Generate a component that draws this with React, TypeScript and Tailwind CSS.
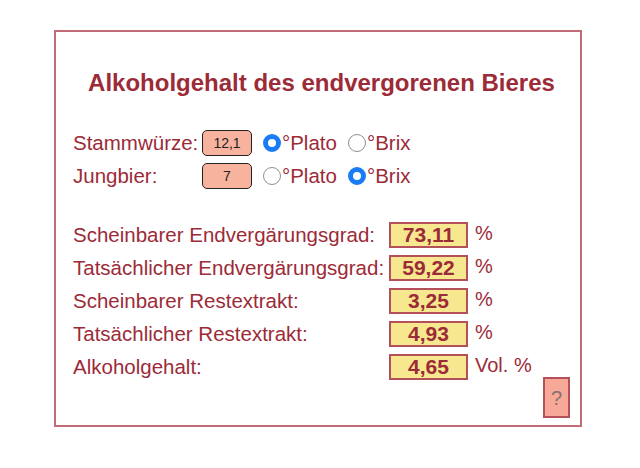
import React from 'react'

const font = { fontFamily: '"Liberation Sans", Arial, sans-serif' }

function Radio({ checked }: { checked: boolean }) {
  if (checked) {
    return <span className="inline-block size-[18px] shrink-0 rounded-full border-[5px] border-[#1a7cf4] bg-white" />
  }
  return <span className="inline-block size-[18px] shrink-0 rounded-full border border-[#8e8e8e] bg-white" />
}

function InputRow({ label, value, plato }: { label: string; value: string; plato: boolean }) {
  return (
    <div className="flex h-[26px] items-center">
      <div className="w-[129px] text-[20.5px] text-[#9c2b38]">{label}</div>
      <div className="flex h-[26px] w-[50px] items-center justify-center rounded-[5px] border border-[#222] bg-[#f8b39f] text-[14px] text-[#222]">
        {value}
      </div>
      <div className="ml-[11px] flex items-center gap-[1px]">
        <Radio checked={plato} />
        <span className="text-[20.5px] text-[#9c2b38]">°Plato</span>
      </div>
      <div className="ml-[11px] flex items-center gap-[1px]">
        <Radio checked={!plato} />
        <span className="text-[20.5px] text-[#9c2b38]">°Brix</span>
      </div>
    </div>
  )
}

function ResultRow({ label, value, unit }: { label: string; value: string; unit: string }) {
  return (
    <div className="flex h-[26px] items-center">
      <div className="w-[316px] text-[20.5px] text-[#9c2b38]">{label}</div>
      <div className="flex h-[26px] w-[79px] items-center justify-center border-2 border-[#b4505a] bg-[#f7e88f] text-[21px] font-bold text-[#9c2b38]">
        {value}
      </div>
      <div className="ml-[7px] mt-[-4px] text-[20px] text-[#9c2b38]">{unit}</div>
    </div>
  )
}

export default function App() {
  return (
    <div className="h-[468px] w-[640px] bg-white pl-[54px] pt-[30px]" style={font}>
      <div className="flex h-[397px] w-[528px] flex-col border-2 border-[#c26c7a] pl-[17px] pr-[10px]">
        <h1 className="mt-[38px] text-center text-[24px] font-bold leading-[26px] text-[#9c2b38]">
          Alkoholgehalt des endvergorenen Bieres
        </h1>
        <div className="mt-[34px] flex flex-col gap-[7px]">
          <InputRow label="Stammwürze:" value="12,1" plato={true} />
          <InputRow label="Jungbier:" value="7" plato={false} />
        </div>
        <div className="mt-[33px] flex flex-col gap-[7px]">
          <ResultRow label="Scheinbarer Endvergärungsgrad:" value="73,11" unit="%" />
          <ResultRow label="Tatsächlicher Endvergärungsgrad:" value="59,22" unit="%" />
          <ResultRow label="Scheinbarer Restextrakt:" value="3,25" unit="%" />
          <ResultRow label="Tatsächlicher Restextrakt:" value="4,93" unit="%" />
          <ResultRow label="Alkoholgehalt:" value="4,65" unit="Vol. %" />
        </div>
        <div className="mt-[-3px] flex justify-end">
          <button className="flex h-[41px] w-[27px] items-center justify-center border-2 border-[#b4505a] bg-[#f8a898] text-[20px] text-[#857070]">
            ?
          </button>
        </div>
      </div>
    </div>
  )
}
